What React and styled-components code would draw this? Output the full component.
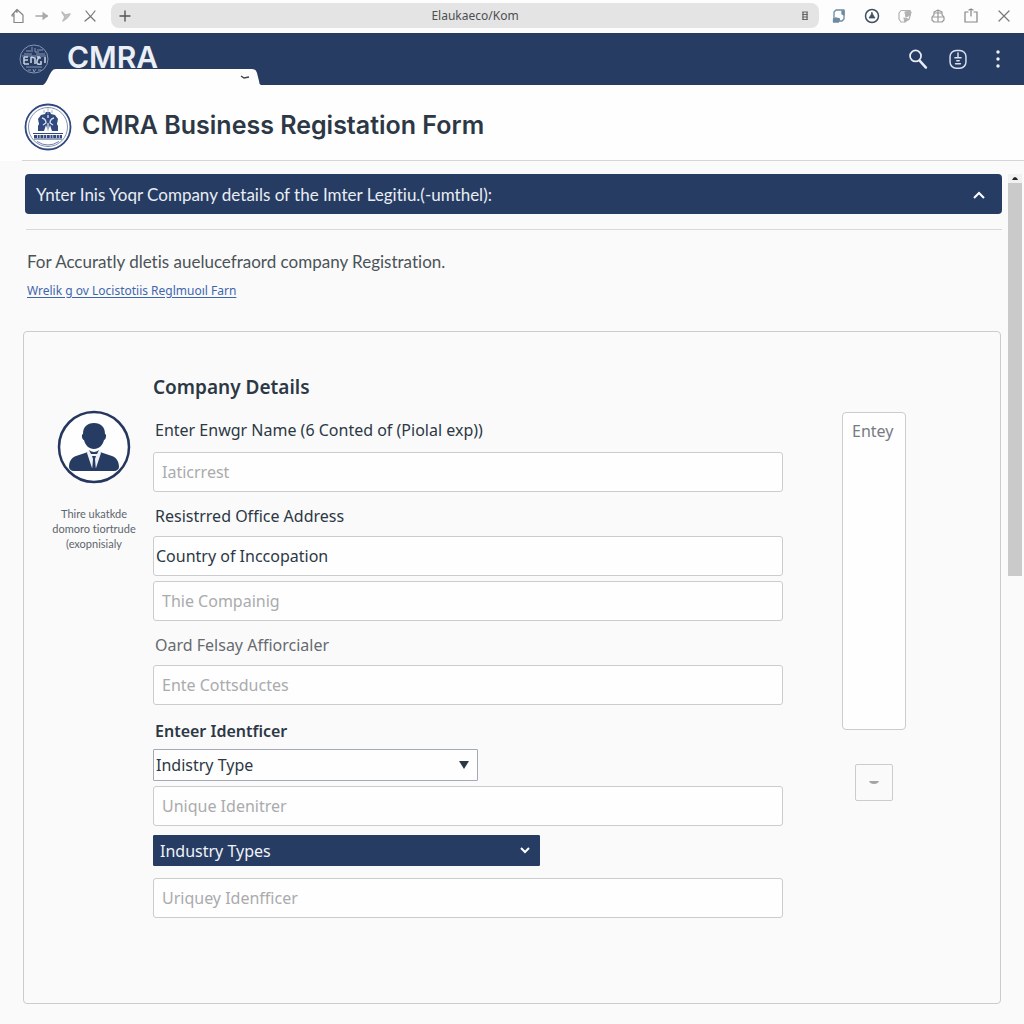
import React from 'react';
import styled, { createGlobalStyle } from 'styled-components';

const navy = '#263c63';
const ink = '#2c3845';
const line = '#cbcccd';
const body = '"Noto Sans", "Open Sans", sans-serif';

const Global = createGlobalStyle`
  * { box-sizing: border-box; }
  body { margin: 0; background: #fafafa; color: ${ink}; font-family: ${body}; font-variant-ligatures: none; }
  button, input, select, textarea { font-family: inherit; }
  h1, h2, p { margin: 0; }
`;

const Page = styled.div`
  min-height: 100vh;
  display: flex;
  flex-direction: column;
`;

/* Browser bar */
const BrowserBar = styled.nav`
  height: 33px;
  padding: 0 4px 2px 6px;
  display: flex;
  align-items: center;
  background: #fdfdfd;
`;
const BarButton = styled.button`
  width: ${(p) => (p.$wide ? 33 : 24)}px;
  height: 28px;
  padding: 0;
  border: 0;
  background: none;
  display: grid;
  place-items: center;
`;
const AddressPill = styled.div`
  flex: 1;
  height: 25px;
  margin: 0 3px 0 9px;
  padding: 0 2px;
  border-radius: 8px;
  background: #e4e4e4;
  display: flex;
  align-items: center;
`;
const Address = styled.input`
  flex: 1;
  min-width: 0;
  padding: 0 0 0 20px;
  border: 0;
  background: none;
  color: #4c4f52;
  font-size: 12px;
  text-align: center;
`;

/* Site header */
const Header = styled.header`
  position: relative;
  height: 52px;
  padding: 0 6px 0 19px;
  display: flex;
  align-items: center;
  background: ${navy};
`;
const Brand = styled.div`
  flex: 1;
  padding: 0 0 4px 18px;
  color: #eceff5;
  font: 600 30px/36px Inter, sans-serif;
`;
const HeaderButton = styled.button`
  width: 40px;
  height: 40px;
  padding: 0;
  border: 0;
  background: none;
  display: grid;
  place-items: center;
`;
const TabShape = styled.svg`
  position: absolute;
  left: 43px;
  bottom: 0;
`;

const TitleWrap = styled.div`
  background: #fefefe;
`;
const TitleBar = styled.div`
  height: 76px;
  margin-left: 22px;
  padding: 8px 2px 0;
  display: flex;
  align-items: center;
  gap: 10px;
  border-bottom: 1px solid #d5d5d5;
`;
const Title = styled.h1`
  padding-bottom: 4px;
  color: ${ink};
  font: 600 25px/32px Inter, sans-serif;
`;

/* Scrolling body */
const Body = styled.div`
  flex: 1;
  display: flex;
  padding: 13px 2px 20px 23px;
`;
const Content = styled.main`
  flex: 1;
  min-width: 0;
  display: flex;
  flex-direction: column;
`;
const ScrollTrack = styled.div`
  width: 14px;
  margin-left: 6px;
`;
const ScrollUp = styled.button`
  width: 14px;
  height: 9px;
  padding: 0;
  border: 0;
  background: #f1f1f1;
  display: grid;
  place-items: center;
`;
const ScrollThumb = styled.div`
  height: 393px;
  background: #cacaca;
`;

const Banner = styled.button`
  height: 40px;
  margin-left: 2px;
  padding: 2px 16px 0 11px;
  border: 0;
  border-radius: 4px;
  background: ${navy};
  color: #e9edf3;
  font: 17px/24px Lato, sans-serif;
  font-variant-ligatures: none;
  display: flex;
  align-items: center;
  justify-content: space-between;
`;
const Intro = styled.section`
  margin: 15px 0 0 3px;
  padding: 20px 1px 29px;
  border-top: 1px solid #d9d9d9;
`;
const IntroText = styled.p`
  color: #4b5357;
  font: 17px/24px Lato, sans-serif;
  font-variant-ligatures: none;
`;
const IntroLink = styled.a`
  display: inline-block;
  margin-top: 6px;
  color: #3f66ad;
  font-size: 12px;
  line-height: 22px;
  text-underline-offset: 2px;
`;

const Card = styled.form`
  flex: 1;
  margin-right: 1px;
  padding: 41px 94px 85px 24px;
  border: 1px solid ${line};
  border-radius: 4px;
  display: grid;
  grid-template-columns: 92px minmax(0, 1fr) 64px;
  align-items: start;
`;
const Profile = styled.aside`
  padding-top: 37px;
  display: flex;
  flex-direction: column;
  align-items: center;
  gap: 22px;
`;
const ProfileNote = styled.p`
  color: #5e656d;
  font: 11px/15px Lato, sans-serif;
  font-variant-ligatures: none;
  text-align: center;
  white-space: nowrap;
`;
const Fields = styled.div`
  margin: 0 59px 0 13px;
  display: flex;
  flex-direction: column;
`;
const Heading = styled.h2`
  font-size: 19px;
  font-weight: 600;
  line-height: 28px;
`;
const Label = styled.label`
  margin-top: ${(p) => p.$top || 12}px;
  padding-left: 2px;
  color: ${(p) => (p.$muted ? '#666b70' : ink)};
  font-size: 16px;
  font-weight: ${(p) => (p.$strong ? 600 : 400)};
  line-height: 24px;
`;
const Field = styled.input`
  width: 100%;
  height: 40px;
  margin-top: ${(p) => p.$top || 8}px;
  padding: 0 ${(p) => (p.$tight ? 2 : 8)}px;
  border: 1px solid ${line};
  border-radius: 3px;
  background: #fefefe;
  color: ${ink};
  font-size: 16px;
  &::placeholder { color: #a9abad; opacity: 1; }
`;
const SelectBox = styled.div`
  position: relative;
  width: 100%;
  max-width: ${(p) => (p.$filled ? 387 : 325)}px;
  margin-top: ${(p) => (p.$filled ? 9 : 6)}px;
`;
const Select = styled.select`
  width: 100%;
  height: ${(p) => (p.$filled ? 31 : 32)}px;
  display: block;
  appearance: none;
  padding: 0 32px 0 ${(p) => (p.$filled ? 6 : 2)}px;
  border: 1px solid ${(p) => (p.$filled ? navy : '#a3a9b8')};
  border-radius: 1px;
  background: ${(p) => (p.$filled ? navy : '#fefefe')};
  color: ${(p) => (p.$filled ? '#f1f3f7' : ink)};
  font-size: 16px;
`;
const SelectMark = styled.svg`
  position: absolute;
  right: ${(p) => (p.$filled ? 9 : 8)}px;
  top: 50%;
  transform: translateY(-50%);
  pointer-events: none;
`;
const Side = styled.aside`
  padding-top: 39px;
  display: flex;
  flex-direction: column;
  align-items: center;
  gap: 34px;
`;
const Entry = styled.textarea`
  width: 64px;
  height: 318px;
  padding: 6px 0 0 9px;
  border: 1px solid ${line};
  border-radius: 4px;
  background: #fefefe;
  font-size: 16px;
  line-height: 24px;
  resize: none;
  display: block;
  &::placeholder { color: #777b82; opacity: 1; }
`;
const Minus = styled.button`
  width: 38px;
  height: 37px;
  padding: 0;
  border: 1px solid ${line};
  border-radius: 2px;
  background: #fafafa;
  display: grid;
  place-items: center;
`;

const Icon = ({ size = 18, color = '#777', w = 1.2, children }) => (
  <svg width={size} height={size} viewBox="0 0 18 18" fill="none" stroke={color}
    strokeWidth={w} strokeLinecap="round" strokeLinejoin="round" aria-hidden="true">
    {children}
  </svg>
);

const BrandSeal = () => (
  <svg width="30" height="32" viewBox="0 0 30 32" fill="none" stroke="#8795b5" strokeWidth="1" aria-hidden="true">
    <circle cx="15" cy="16" r="14" />
    <path d="M7 8h5M5 11h8M13 4v5M16 5v4h4M18 7h6M17 11h9M3 13h24M7 24h16M9 27h3M14 26l1 3 2-3M19 27h3" />
    <path d="M5 14v7M5 14h4M5 17h4M5 21h5M12 14v6M12 14l4 1v6M18 14h3M22 15q-3-1-4 3t4 3v-3M26 14v6" stroke="#c5cddd" strokeWidth="1.600" />
  </svg>
);

const FormSeal = () => (
  <svg width="48" height="48" viewBox="0 0 48 48" fill="none" stroke="#31497f" aria-hidden="true">
    <circle cx="24" cy="24" r="22.500" strokeWidth="1.800" />
    <circle cx="24" cy="24" r="19.500" stroke="#8492b4" strokeWidth="1" />
    <path d="M14 28v-5l1-2-1-5 3-4 4-1 1-2h4l1 2 4 1 3 4-1 5 1 2v5h-6l-2-6-2 6-2-6-2 6z" fill="#31497f" stroke="none" />
    <path d="M18 15q4 1 4 5l-3 2M30 15q-4 1-4 5l3 2M24 12v3M24 20v8" stroke="#dce2ee" strokeWidth="1.300" />
    <path d="M24 5v6M20 7v3M28 7v3" stroke="#9aa6c2" strokeWidth=".8" />
    <path d="M9 30.500h30M10 36h28" strokeWidth="1.200" />
    <path d="M10 33.500h28" strokeWidth="3" strokeDasharray="3 .7 2 .7" />
    <path d="M13 38.500q11 7 22 0" stroke="#6f80a8" strokeWidth="1" />
  </svg>
);

const Avatar = () => (
  <svg width="74" height="74" viewBox="0 0 74 74" aria-hidden="true">
    <circle cx="37" cy="37" r="35" fill="#fefefe" stroke="#26375f" strokeWidth="2.500" />
    <path d="M37 13c7 0 11 4 11 11 2 0 1 6-1 6-1 5-5 9-10 9s-9-4-10-9c-2 0-3-6-1-6 0-7 4-11 11-11z" fill={navy} />
    <path d="M31 42l-12 4c-5 2-7 6-7 11 0 2 2 4 5 4h40c3 0 5-2 5-4 0-5-2-9-7-11l-12-4-6 2z" fill={navy} />
    <path d="M31 40l6 3 6-3 1 3-5 15h-4l-5-15z" fill="#eef0f4" />
    <path d="M32 40q5 4 10 0l-2 4h-6zM35 46h4l-1 3 1 12h-4l1-12z" fill={navy} />
  </svg>
);

export default function App() {
  return (
    <Page>
      <Global />
      <BrowserBar aria-label="Browser">
        <BarButton aria-label="Home"><Icon color="#858585"><path d="M3 8l5-5.500L14 8M5 7v8.500h9V8M3 8v1h2M8 2.500v3" /></Icon></BarButton>
        <BarButton aria-label="Forward"><Icon color="#a8a8a8" w={1.600}><path d="M3 9h11" /><path d="M10 5.500l5 3.500-5 3.500z" fill="#a8a8a8" strokeWidth=".6" /></Icon></BarButton>
        <BarButton aria-label="Next"><Icon color="#b9bdb9" w={1.500}><path d="M5 5l3 3 5-1-3 4-4 3 2-4z" fill="#c4c8c4" /></Icon></BarButton>
        <BarButton aria-label="Stop"><Icon color="#747474"><path d="M5 4l4 5 5 5M14 4l-4 5-6 5M5 13l3-2" /></Icon></BarButton>
        <AddressPill>
          <BarButton aria-label="New tab"><Icon color="#555" w={1.400}><path d="M9 4v10M4 9h10" /></Icon></BarButton>
          <Address aria-label="Address" defaultValue="Elaukaeco/Kom" />
          <BarButton aria-label="Reader"><Icon color="#666"><path d="M6.500 5h5M6.500 7.500h5M6.500 10h5M6.500 12.500h5M7 5v7M11 5v7" /></Icon></BarButton>
        </AddressPill>
        <BarButton $wide aria-label="Save"><Icon color="#6d8ba0" w={1.300}><path d="M6 3h8v9l-2 2H9M6 3L4 5v7" /><path d="M3.500 12l2-1 4 1-1 3h-5zM12 4h2v4l-2-1z" fill="#6d8ba0" /></Icon></BarButton>
        <BarButton $wide aria-label="Account"><Icon color="#40505f" w={1.500}><circle cx="9" cy="9" r="6.500" /><path d="M9 5.500l1 2.500 2 3H6l2-3z" fill="#40505f" strokeWidth=".8" /></Icon></BarButton>
        <BarButton $wide aria-label="Shield"><Icon color="#b0b2b3"><path d="M5 3.500h9l1 2-2 7-5 2.500H5l-2-3V6z" /><path d="M9 5l5-1v4l-4 2zM8 11l4 1-3 3z" fill="#b0b2b3" /></Icon></BarButton>
        <BarButton $wide aria-label="Extensions"><Icon color="#999"><path d="M5 8V5l4-2 4 2v3M9 3v12M3 10h12v3l-2 2H5l-2-2zM5 7.500 3 10M13 7.500l2 2.500M6 6h6" /></Icon></BarButton>
        <BarButton $wide aria-label="Share"><Icon color="#858585"><path d="M6 5H3v10h12V5h-3M9 9V2M7 3l2-1 2 1" /></Icon></BarButton>
        <BarButton $wide aria-label="Close"><Icon color="#777"><path d="M4 4l10 10M14 4 4 14" /></Icon></BarButton>
      </BrowserBar>

      <Header>
        <BrandSeal />
        <Brand>CMRA</Brand>
        <TabShape width="218" height="16" viewBox="0 0 218 16" aria-hidden="true">
          <path d="M0 16C4 14 6 5 9 2q1-2 4-2h196q4 0 5 4l2 8q0 3 2 4z" fill="#fefefe" />
          <path d="M198 7l3 2 5-1" fill="none" stroke="#444" strokeWidth="1.500" />
        </TabShape>
        <HeaderButton aria-label="Search"><Icon size={22} color="#e9edf5" w={1.400}><circle cx="7" cy="6.500" r="4.500" /><path d="M10.500 10.500l5 5.500" strokeWidth="2" /></Icon></HeaderButton>
        <HeaderButton aria-label="Profile"><Icon size={22} color="#d9e0ed"><rect x="2.500" y="2" width="13" height="14.500" rx="5" /><path d="M9 4v4M6.500 8h5M8 10.500h2M7 12.800h4" /></Icon></HeaderButton>
        <HeaderButton aria-label="More"><svg width="6" height="18" fill="#eef1f6" aria-hidden="true"><circle cx="3" cy="2" r="1.700" /><circle cx="3" cy="9" r="1.700" /><circle cx="3" cy="16" r="1.700" /></svg></HeaderButton>
      </Header>

      <TitleWrap>
        <TitleBar>
          <FormSeal />
          <Title>CMRA Business Registation Form</Title>
        </TitleBar>
      </TitleWrap>

      <Body>
        <Content>
          <Banner type="button" aria-expanded="true">
            <span>Ynter Inis Yoqr Company details of the Imter Legitiu.(-umthel):</span>
            <svg width="14" height="10" fill="none" stroke="#fff" strokeWidth="2" aria-hidden="true"><path d="M2 8l5-5 5 5" /></svg>
          </Banner>
          <Intro>
            <IntroText>For Accuratly dletis auelucefraord company Registration.</IntroText>
            <IntroLink href="#form">Wrelik g ov Locistotiis Reglmuoıl Farn</IntroLink>
          </Intro>

          <Card id="form">
            <Profile>
              <Avatar />
              <ProfileNote>Thire ukatkde<br />domoro tiortrude<br />(exopnisialy</ProfileNote>
            </Profile>
            <Fields>
              <Heading>Company Details</Heading>
              <Label htmlFor="name" $top={17}>Enter Enwgr Name (6 Conted of (Piolal exp))</Label>
              <Field id="name" $top={10} placeholder="Iaticrrest" />
              <Label htmlFor="office">Resistrred Office Address</Label>
              <Field id="office" $tight defaultValue="Country of Inccopation" />
              <Field aria-label="Company" $top={5} placeholder="Thie Compainig" />
              <Label htmlFor="card" $muted>Oard Felsay Affiorcialer</Label>
              <Field id="card" placeholder="Ente Cottsductes" />
              <Label htmlFor="industry" $strong $top={14}>Enteer Identficer</Label>
              <SelectBox>
                <Select id="industry"><option>Indistry Type</option></Select>
                <SelectMark width="12" height="8" aria-hidden="true"><path d="M1 0h10L6 8z" fill={ink} /></SelectMark>
              </SelectBox>
              <Field aria-label="Unique identifier" $top={5} placeholder="Unique Idenitrer" />
              <SelectBox $filled>
                <Select $filled aria-label="Industry types"><option>Industry Types</option></Select>
                <SelectMark $filled width="12" height="8" fill="none" stroke="#fff" strokeWidth="2" aria-hidden="true"><path d="M2 1l4 4 4-4" /></SelectMark>
              </SelectBox>
              <Field aria-label="Second identifier" $top={12} placeholder="Uriquey Idenfficer" />
            </Fields>
            <Side>
              <Entry aria-label="Entry" placeholder="Entey" />
              <Minus type="button" aria-label="Remove"><svg width="10" height="4" aria-hidden="true"><path d="M0 0h10q-1 3-5 3T0 0" fill="#a5a3a8" /></svg></Minus>
            </Side>
          </Card>
        </Content>
        <ScrollTrack>
          <ScrollUp type="button" aria-label="Scroll up"><svg width="6" height="3" aria-hidden="true"><path d="M0 3q3-6 6 0z" fill="#222" /></svg></ScrollUp>
          <ScrollThumb />
        </ScrollTrack>
      </Body>
    </Page>
  );
}
